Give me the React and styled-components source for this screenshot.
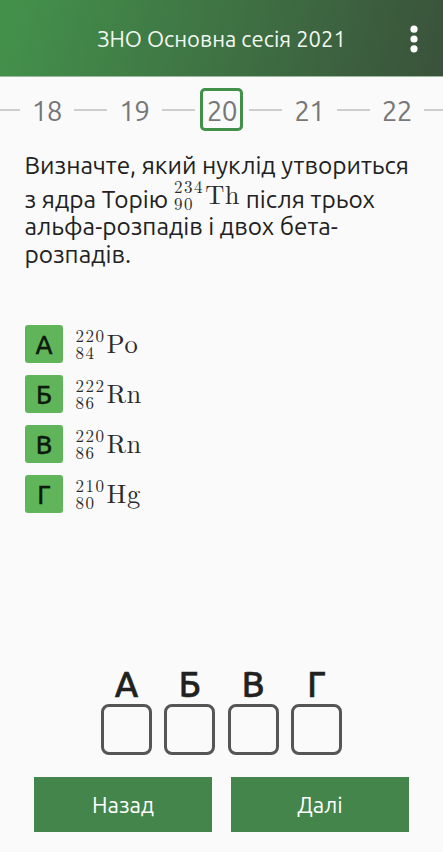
import React from "react";
import styled, { createGlobalStyle } from "styled-components";

const Global = createGlobalStyle`
  *, *::before, *::after { box-sizing: border-box; }
  body { margin: 0; background: #fafafa; }
  button { font: inherit; border: 0; padding: 0; }
`;

const Screen = styled.div`
  display: flex;
  flex-direction: column;
  width: 443px;
  height: 852px;
  overflow: hidden;
  background: #fafafa;
  color: #212121;
  font-family: Ubuntu, "Noto Sans", sans-serif;
`;

const Header = styled.header`
  display: grid;
  grid-template-columns: 60px 1fr 60px;
  align-items: center;
  flex: none;
  height: 76px;
  color: #f3f8f3;
  background: linear-gradient(105deg, #43904b 4%, #3a523b 100%);
`;

const Title = styled.h1`
  grid-column: 2;
  margin: 0;
  text-align: center;
  white-space: nowrap;
  font-size: 22px;
  font-weight: 400;
`;

const MenuButton = styled.button`
  display: flex;
  justify-content: center;
  padding: 2px 0 0 1px;
  background: none;
  color: #fff;
`;

const Pager = styled.nav`
  display: grid;
  grid-template-columns: 19.5px 54.5px 33px 54.5px 33px 54.5px 33px 54.5px 33px 54.5px 19px;
  align-items: center;
  flex: none;
  height: 66px;
  border-top: 1px solid #9db79f;
`;

const Dash = styled.span`
  height: 2px;
  background: #cecece;
`;

const PageNumber = styled.span`
  justify-self: center;
  display: flex;
  align-items: center;
  justify-content: center;
  width: 43px;
  height: 43px;
  padding-top: 2px;
  border: 3px solid ${(p) => (p.$active ? "#43904b" : "transparent")};
  border-radius: 5px;
  color: #777;
  font-size: 28px;
  letter-spacing: -0.9px;
`;

const Question = styled.div`
  display: flex;
  flex-direction: column;
  flex: none;
  height: 183px;
  padding: 9px 0 0 24.5px;
  font-size: 24.45px;
`;

const Line = styled.div`
  display: flex;
  align-items: center;
  height: ${(p) => p.$height || 28}px;
  line-height: 28px;
  padding-top: ${(p) => p.$top || 0}px;
  white-space: pre;
`;

const NuclideBox = styled.span`
  display: inline-flex;
  align-items: center;
  height: 36px;
  margin-bottom: ${(p) => p.$raise || 0}px;
  color: #2a2a2a;
  font-family: "Latin Modern Roman", "Liberation Serif", serif;
`;

const Scripts = styled.span`
  display: flex;
  flex-direction: column;
  width: 31.5px;
  padding-left: 0.4px;
  font-size: 17px;
  line-height: 17px;
  letter-spacing: 1.5px;
`;

const Symbol = styled.span`
  padding-bottom: 4px;
  font-size: 26.5px;
  line-height: 34px;
  letter-spacing: 0.6px;
`;

const Answers = styled.div`
  display: flex;
  flex-direction: column;
  gap: 12px;
  flex: none;
  height: 338px;
  padding-left: 25px;
`;

const Answer = styled.div`
  display: flex;
  align-items: center;
  gap: 12px;
  height: 38px;
`;

const Letter = styled.span`
  display: flex;
  align-items: center;
  justify-content: center;
  width: 38px;
  height: 38px;
  padding-top: 1px;
  border-radius: 3px;
  background: #60b45a;
  color: #0d1a0d;
  font-size: 25.5px;
  font-weight: 500;
  -webkit-text-stroke: 0.3px currentColor;
`;

const Choices = styled.div`
  display: flex;
  justify-content: center;
  gap: 12.3px;
  flex: none;
  height: 114px;
`;

const Choice = styled.label`
  display: flex;
  flex-direction: column;
  align-items: center;
  width: 51px;
`;

const ChoiceLetter = styled.span`
  height: 41px;
  padding-top: 1px;
  font-size: 35px;
  line-height: 41px;
  font-weight: 500;
  -webkit-text-stroke: 0.6px currentColor;
`;

const Box = styled.span`
  width: 51px;
  height: 51px;
  border: 3px solid #555;
  border-radius: 8px;
`;

const Actions = styled.footer`
  display: flex;
  justify-content: center;
  gap: 18.5px;
`;

const Action = styled.button`
  width: 178.5px;
  height: 55px;
  padding-bottom: 1px;
  background: #43854b;
  color: #fff;
  font-size: 22.3px;
`;

const Nuclide = ({ mass, charge, symbol, raise }) => (
  <NuclideBox $raise={raise}>
    <Scripts>
      <span>{mass}</span>
      <span>{charge}</span>
    </Scripts>
    <Symbol>{symbol}</Symbol>
  </NuclideBox>
);

const pages = [18, 19, 20, 21, 22];
const answers = [
  ["А", "220", "84", "Po"],
  ["Б", "222", "86", "Rn"],
  ["В", "220", "86", "Rn"],
  ["Г", "210", "80", "Hg"],
];

export default function App() {
  return (
    <Screen>
      <Global />
      <Header>
        <Title>ЗНО Основна сесія 2021</Title>
        <MenuButton aria-label="Меню">
          <svg width="8" height="28" viewBox="0 0 8 28" fill="currentColor">
            <circle cx="4" cy="4.2" r="3.6" />
            <circle cx="4" cy="14" r="3.6" />
            <circle cx="4" cy="23.8" r="3.6" />
          </svg>
        </MenuButton>
      </Header>
      <Pager>
        <Dash />
        {pages.map((n) => (
          <React.Fragment key={n}>
            <PageNumber $active={n === 20}>{n}</PageNumber>
            <Dash />
          </React.Fragment>
        ))}
      </Pager>
      <Question>
        <Line>Визначте, який нуклід утвориться</Line>
        <Line $height={33} $top={7}>
          <span>з ядра Торію </span>
          <Nuclide mass="234" charge="90" symbol="Th" raise={9} />
          <span> після трьох</span>
        </Line>
        <Line>альфа-розпадів і двох бета-</Line>
        <Line>розпадів.</Line>
      </Question>
      <Answers>
        {answers.map(([letter, mass, charge, symbol]) => (
          <Answer key={letter}>
            <Letter>{letter}</Letter>
            <Nuclide mass={mass} charge={charge} symbol={symbol} />
          </Answer>
        ))}
      </Answers>
      <Choices>
        {answers.map(([letter]) => (
          <Choice key={letter}>
            <ChoiceLetter>{letter}</ChoiceLetter>
            <Box />
          </Choice>
        ))}
      </Choices>
      <Actions>
        <Action>Назад</Action>
        <Action>Далі</Action>
      </Actions>
    </Screen>
  );
}
